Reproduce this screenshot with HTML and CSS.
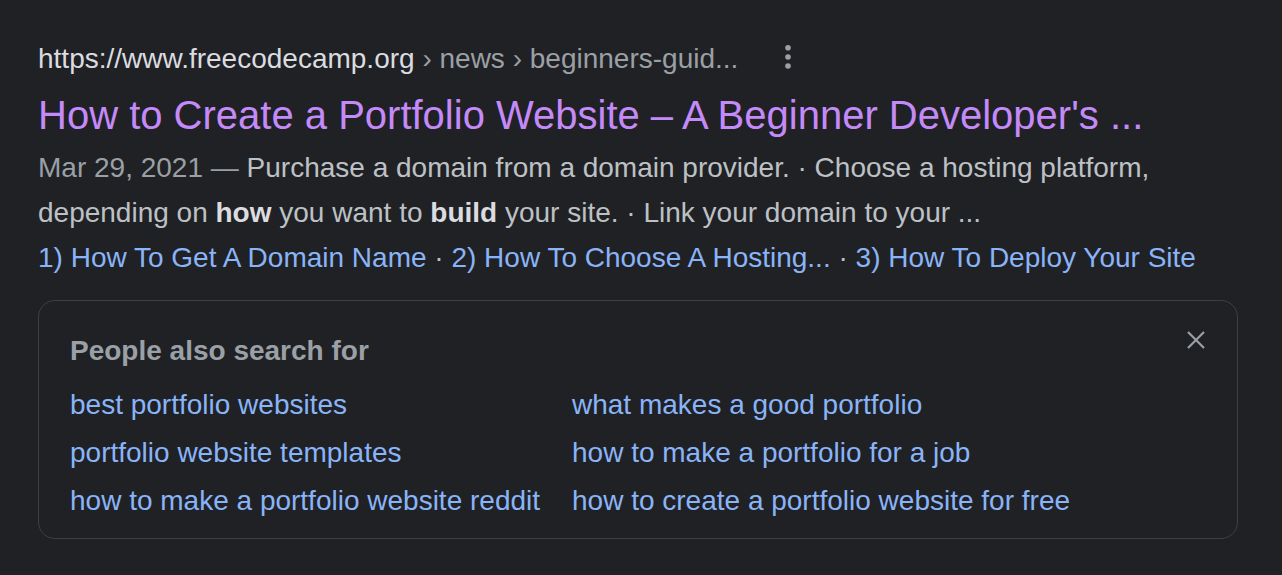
FILE: index.html
```html
<!DOCTYPE html>
<html lang="en">
<head>
<meta charset="utf-8">
<title>Search result</title>
<link rel="stylesheet" href="styles.css">
</head>
<body>
<main class="result">
  <div class="url-row">
    <cite class="url"><span class="domain">https://www.freecodecamp.org</span><span class="path"> › news › beginners-guid...</span></cite>
    <svg class="kebab" width="8" height="28" viewBox="0 0 8 28" aria-hidden="true">
      <circle cx="4" cy="4.7" r="2.8" fill="#9aa0a6"/>
      <circle cx="4" cy="14" r="2.8" fill="#9aa0a6"/>
      <circle cx="4" cy="23" r="2.8" fill="#9aa0a6"/>
    </svg>
  </div>
  <h3 class="title">How to Create a Portfolio Website – A Beginner Developer's ...</h3>
  <div class="snippet">
    <span class="date">Mar 29, 2021 — </span>Purchase a domain from a domain provider. · Choose a hosting platform, depending on <b>how</b> you want to <b>build</b> your site. · Link your domain to your ...
  </div>
  <div class="sitelinks">
    <a class="sitelink">1) How To Get A Domain Name</a><span class="sep"> · </span><a class="sitelink">2) How To Choose A Hosting...</a><span class="sep"> · </span><a class="sitelink">3) How To Deploy Your Site</a>
  </div>

  <section class="related">
    <div class="related-head">
      <h4 class="related-title">People also search for</h4>
      <svg class="close" width="20" height="20" viewBox="0 0 20 20" aria-hidden="true">
        <path d="M2 2 L18 18 M18 2 L2 18" stroke="#9aa0a6" stroke-width="2.2" fill="none"/>
      </svg>
    </div>
    <div class="related-grid">
      <a class="rel-link">best portfolio websites</a>
      <a class="rel-link">what makes a good portfolio</a>
      <a class="rel-link">portfolio website templates</a>
      <a class="rel-link">how to make a portfolio for a job</a>
      <a class="rel-link">how to make a portfolio website reddit</a>
      <a class="rel-link">how to create a portfolio website for free</a>
    </div>
  </section>
</main>
</body>
</html>
```

FILE: styles.css
```css
html, body {
  margin: 0;
  padding: 0;
  background: #202124;
}

body {
  font-family: Arial, "Liberation Sans", sans-serif;
  color: #bdc1c6;
  height: 575px;
  overflow: hidden;
}

.result {
  width: 1200px;
  padding: 39px 0 0 38px;
}

.url-row {
  display: flex;
  align-items: center;
  height: 40px;
}

.url {
  font-style: normal;
  font-size: 28px;
  line-height: 40px;
  white-space: nowrap;
}

.domain {
  color: #dadce0;
}

.path {
  color: #9aa0a6;
}

.kebab {
  margin-left: 46px;
  margin-top: -4px;
  flex: none;
}

.title {
  margin: 10px 0 0;
  font-size: 40px;
  line-height: 52px;
  font-weight: normal;
  color: #c58af9;
  white-space: nowrap;
}

.snippet {
  margin-top: 4px;
  font-size: 28px;
  line-height: 45px;
  color: #bdc1c6;
}

.snippet b {
  color: #dadce0;
  font-weight: bold;
}

.date {
  color: #9aa0a6;
}

.sitelinks {
  font-size: 28px;
  line-height: 45px;
  white-space: nowrap;
}

.sitelink {
  color: #8ab4f8;
}

.sep {
  color: #bdc1c6;
}

.related {
  margin-top: 20px;
  border: 1px solid #3c4043;
  border-radius: 17px;
  padding: 30px 31px 13px 31px;
}

.related-head {
  display: flex;
  justify-content: space-between;
  align-items: flex-start;
}

.related-title {
  margin: 0;
  font-size: 28px;
  line-height: 40px;
  font-weight: bold;
  color: #9aa0a6;
}

.close {
  margin-top: -1px;
  margin-right: 0;
  flex: none;
}

.related-grid {
  margin-top: 10px;
  display: grid;
  grid-template-columns: 502px 1fr;
}

.rel-link {
  font-size: 28px;
  line-height: 48px;
  color: #8ab4f8;
  white-space: nowrap;
}
```
